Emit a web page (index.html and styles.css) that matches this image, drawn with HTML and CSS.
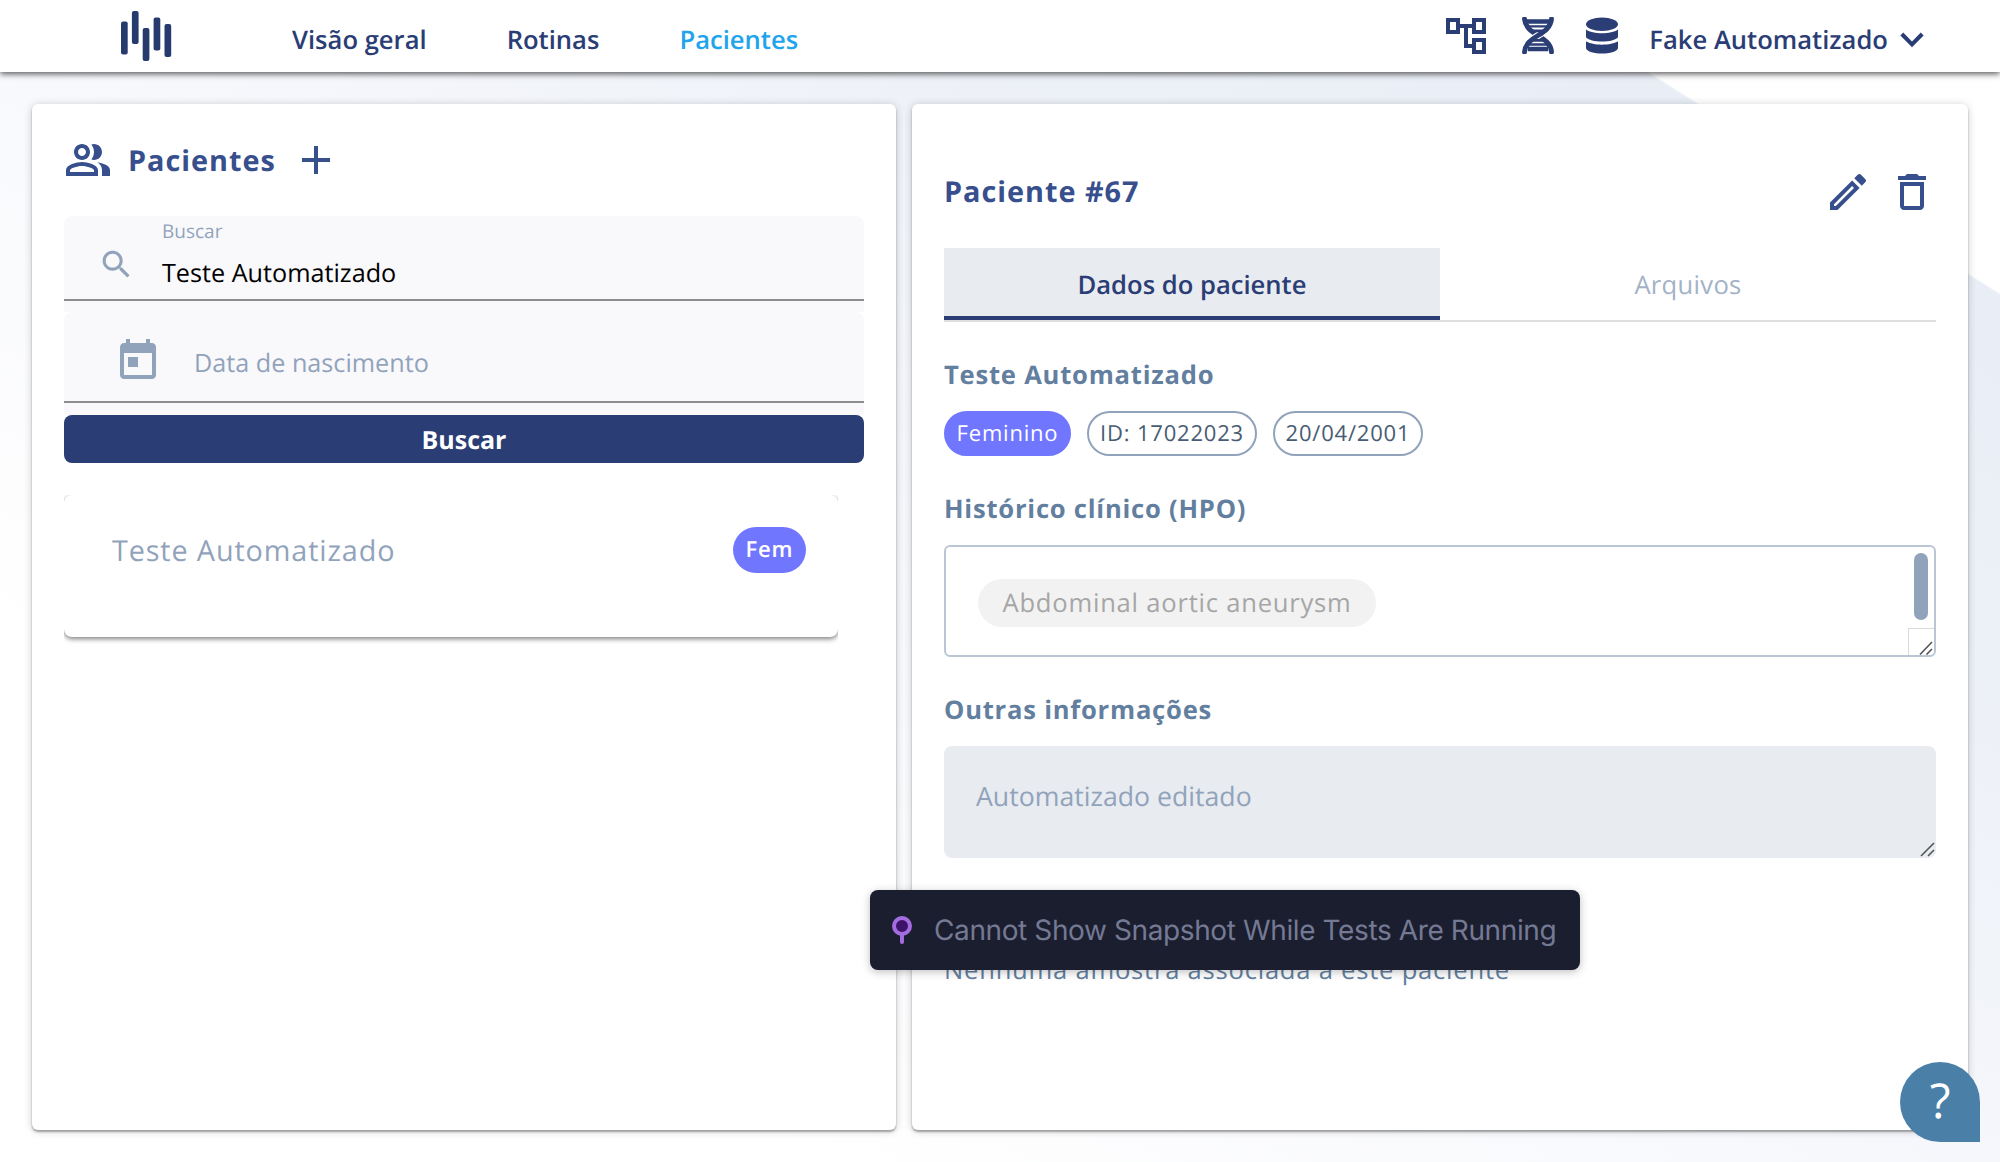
FILE: index.html
```
<!DOCTYPE html>
<html lang="pt-BR">
<head>
<meta charset="utf-8">
<title>Pacientes</title>
<link rel="stylesheet" href="styles.css">
</head>
<body>
<header class="topbar">
  <svg class="logo" width="52" height="52" viewBox="0 0 52 52"><rect x="1" y="11.500" width="6.700" height="33" rx="2"/><rect x="11.900" y="1" width="6.700" height="33" rx="2"/><rect x="22.700" y="18" width="6.700" height="33" rx="2"/><rect x="33.600" y="7.500" width="6.700" height="33" rx="2"/><rect x="44.500" y="14" width="6.700" height="33" rx="2"/></svg>
  <nav class="nav">
    <a>Visão geral</a>
    <a>Rotinas</a>
    <a class="active">Pacientes</a>
  </nav>
  <div class="tools">
    <svg width="48" height="48" viewBox="0 0 24 24"><path d="M22 11V3h-7v3H9V3H2v8h7V8h2v10h4v3h7v-8h-7v3h-2V8h2v3h7zM7 9H4V5h3v4zm10 6h3v4h-3v-4zm0-10h3v4h-3V5z"/></svg>
    <svg class="dna" width="32" height="37" viewBox="0 0 32 37"><path d="M2.500 2C4 19 28 18 29.500 35" class="strand"/><path d="M29.500 2C28 19 4 18 2.500 35" class="gap"/><path d="M29.500 2C28 19 4 18 2.500 35" class="strand"/><path d="M4 4.500h24M6 32h20" stroke="#2a3d75" stroke-width="4.400"/><path d="M7 9.400h18M7 27.500h18" stroke="#2a3d75" stroke-width="2.400"/><path d="M10 13.800h12M10 23.300h13" stroke="#2a3d75" stroke-width="2.800"/></svg>
    <svg class="db" width="32" height="37" viewBox="0 0 32 37"><ellipse cx="16" cy="7.200" rx="16" ry="6.700"/><path d="M0 12.500c7 5 25 5 32 0v7.800c-4 5.700-28 5.700-32 0zM0 24.300c7 4.500 25 4.500 32 0v7c-2 7-30 7-32 0z"/></svg>
    <span class="user">Fake Automatizado</span>
    <svg class="chev" width="24" height="16" viewBox="0 0 24 16"><path d="M1.800 2l10.200 10.500L22.200 2" fill="none" stroke="#2a3d75" stroke-width="4"/></svg>
  </div>
</header>
<main class="page">
  <section class="panel list-panel">
    <div class="list-head">
      <svg width="48" height="48" viewBox="0 0 24 24"><path d="M16.670 13.130C18.040 14.060 19 15.320 19 17v3h4v-3c0-2.180-3.570-3.470-6.330-3.870zM15 12c2.210 0 4-1.790 4-4s-1.790-4-4-4c-.47 0-.91.1-1.330.24C14.500 5.270 15 6.580 15 8s-.5 2.730-1.330 3.760c.42.14.86.24 1.330.24zM9 12c2.210 0 4-1.790 4-4s-1.790-4-4-4-4 1.790-4 4 1.790 4 4 4zm0-6c1.100 0 2 .9 2 2s-.9 2-2 2-2-.9-2-2 .9-2 2-2zM9 13c-2.670 0-8 1.340-8 4v3h16v-3c0-2.660-5.330-4-8-4zm6 5H3v-.99C3.200 16.290 6.300 15 9 15s5.800 1.290 6 2v1z"/></svg>
      <h1>Pacientes</h1>
      <svg class="plus" width="28" height="28" viewBox="0 0 28 28"><path d="M14 0v28M0 14h28" stroke="#384f8d" stroke-width="4"/></svg>
    </div>
    <div class="field search">
      <div class="field-box">
        <svg width="37" height="37" viewBox="0 0 24 24"><path d="M15.500 14h-.79l-.28-.27C15.410 12.590 16 11.110 16 9.500 16 5.910 13.090 3 9.500 3S3 5.910 3 9.500 5.910 16 9.500 16c1.610 0 3.090-.59 4.230-1.570l.27.28v.79l5 4.990L20.490 19l-4.990-5zm-6 0C7.010 14 5 11.990 5 9.500S7.010 5 9.500 5 14 7.010 14 9.500 11.990 14 9.500 14z"/></svg>
        <div class="field-text"><label>Buscar</label><span>Teste Automatizado</span></div>
      </div>
    </div>
    <div class="field date">
      <div class="field-box">
        <svg width="48" height="48" viewBox="0 0 24 24"><path d="M19 3h-1V1h-2v2H8V1H6v2H5c-1.110 0-1.990.9-1.990 2L3 19c0 1.100.89 2 2 2h14c1.100 0 2-.9 2-2V5c0-1.100-.9-2-2-2zm0 16H5V8h14v11zM7 10h5v5H7z"/></svg>
        <span>Data de nascimento</span>
      </div>
    </div>
    <button class="btn">Buscar</button>
    <div class="result-clip">
      <div class="result"><span class="result-name">Teste Automatizado</span><span class="badge">Fem</span></div>
    </div>
  </section>
  <section class="panel detail">
    <div class="detail-head">
      <h2>Paciente #67</h2>
      <svg width="48" height="48" viewBox="0 0 24 24"><path d="M14.060 9.020l.92.92L5.920 19H5v-.92l9.060-9.060M17.660 3c-.25 0-.51.1-.7.290l-1.830 1.830 3.750 3.750 1.830-1.830c.39-.39.39-1.020 0-1.410l-2.340-2.340c-.2-.2-.45-.29-.71-.29zm-3.600 3.190L3 17.250V21h3.750L17.810 9.940l-3.750-3.750z"/></svg>
      <svg class="trash" width="48" height="48" viewBox="0 0 24 24"><path d="M6 19c0 1.100.9 2 2 2h8c1.100 0 2-.9 2-2V7H6v12zM8 9h8v10H8V9zm7.500-5l-1-1h-5l-1 1H5v2h14V4z"/></svg>
    </div>
    <div class="tabs"><div class="tab on">Dados do paciente</div><div class="tab files">Arquivos</div></div>
    <h3 class="name">Teste Automatizado</h3>
    <div class="chips"><span class="chip fill">Feminino</span><span class="chip id">ID: 17022023</span><span class="chip born">20/04/2001</span></div>
    <h3 class="hist">Histórico clínico (HPO)</h3>
    <div class="hpo">
      <span class="term">Abdominal aortic aneurysm</span>
      <div class="thumb"></div>
      <div class="corner"><svg width="14" height="14" viewBox="0 0 14 14"><path d="M1 13.500L13 1M7.500 13.500L13 8" stroke="#555" stroke-width="1.600"/></svg></div>
    </div>
    <h3 class="other">Outras informações</h3>
    <div class="notes"><span>Automatizado editado</span><svg width="15" height="15" viewBox="0 0 15 15"><path d="M1 14L14 1M8 14l6-6" stroke="#555" stroke-width="1.600"/></svg></div>
    <p class="empty">Nenhuma amostra associada a este paciente</p>
  </section>
</main>
<div class="toast">
  <svg width="20" height="29" viewBox="0 0 20 29"><path d="M10 19v7" stroke="#a36de0" stroke-width="4" stroke-linecap="round"/><circle cx="10" cy="10" r="8" fill="#3c1368" stroke="#a36de0" stroke-width="4"/></svg>
  <span>Cannot Show Snapshot While Tests Are Running</span>
</div>
<div class="help">?</div>
</body>
</html>
```

FILE: styles.css
```
* { box-sizing: border-box; }
body {
  margin: 0;
  width: 2000px;
  height: 1162px;
  overflow: hidden;
  font-family: "Open Sans", "Noto Sans", sans-serif;
  font-size: 25.6px;
  line-height: 36px;
  text-rendering: geometricPrecision;
  display: flex;
  flex-direction: column;
}
h1, h2, h3, p { margin: 0; }
svg { display: block; flex: none; fill: #2a3d75; }

/* Top bar */
.topbar {
  height: 72px;
  flex: none;
  display: flex;
  align-items: flex-start;
  padding: 0 76px 0 120px;
  background: #fff;
  box-shadow: 0 2px 6px rgba(0, 0, 0, .65);
  position: relative;
  z-index: 2;
}
.logo { margin-top: 10px; fill: #263a6e; }
.nav {
  display: flex;
  gap: 80px;
  margin: 22px 0 0 120px;
  font-weight: 600;
  color: #2a3d75;
}
.nav .active { color: #20a4ec; }
.tools { margin: 12px 0 0 auto; display: flex; color: #2a3d75; }
.dna { margin: 5px 0 0 32px; }
.strand { fill: none; stroke: #2a3d75; stroke-width: 4.9; stroke-linecap: round; }
.gap { fill: none; stroke: #fff; stroke-width: 7; stroke-dasharray: 0 17 11 99; }
.db { margin: 5px 0 0 32px; }
.user { font-weight: 600; margin: 10px 12px 0 31px; }
.chev { margin-top: 20px; }

/* Page */
.page {
  flex: 1;
  min-height: 0;
  display: flex;
  gap: 16px;
  padding: 32px;
  background: linear-gradient(212.2deg, #fff 9.4%, #e9edf6 9.5%, #edf1f7 28%, #f7f8fc 50%, #fff 78%);
}
.panel {
  background: #fff;
  border-radius: 6px;
  box-shadow: 0 2px 2px rgba(0, 0, 0, .3), 0 1px 8px rgba(0, 0, 0, .2);
}
.list-panel { width: 864px; padding: 32px; }
.list-head { height: 48px; display: flex; align-items: center; color: #384f8d; }
.list-head svg { fill: #384f8d; }
h1, h2 { font-size: 28.8px; font-weight: 700; letter-spacing: 1px; color: #384f8d; }
h1 { margin: 1px 0 0 16px; }
.list-head .plus { margin-left: 26px; }
.field { background: #f9f9fb; height: 96px; padding-bottom: 11px; }
.field-box { display: flex; height: 85px; border-bottom: 2px solid #8d8d90; }
.field svg { fill: #91a3bb; }
.search { margin-top: 32px; border-radius: 8px 8px 0 0; }
.search svg { margin: 30px 0 0 34px; }
.field-text { display: flex; flex-direction: column; margin-left: 27px; }
.field-text label { font-size: 19px; line-height: 28px; margin-top: 1px; color: #91a3bb; }
.field-text span { margin-top: 10px; color: #000; font-size: 25.2px; }
.date { height: 103px; border-radius: 8px 8px 0 0; }
.date .field-box { height: 91px; }
.date svg { margin: 25px 0 0 50px; }
.date span { margin: 33px 0 0 32px; color: #91a3bb; font-size: 25.2px; }
.btn {
  display: block;
  width: 800px;
  height: 48px;
  border: 0;
  border-radius: 8px;
  background: #2a3d75;
  color: #fff;
  font: 700 25px/36px "Open Sans", sans-serif;
  text-rendering: inherit;
  padding: 1px 0 0;
}
.result-clip { width: 774px; margin-top: 32px; overflow: hidden; padding-bottom: 12px; }
.result {
  height: 142px;
  border-radius: 8px;
  box-shadow: 0 2px 5px rgba(0, 0, 0, .5);
  display: flex;
  justify-content: space-between;
  align-items: flex-start;
  padding: 32px 32px 0 48px;
}
.result-name { margin-top: 6px; font-size: 28.8px; letter-spacing: .03em; color: #91a3bb; }
.badge {
  width: 73px;
  height: 46px;
  border-radius: 23px;
  background: #7176ff;
  color: #fff;
  font-size: 22px;
  font-weight: 600;
  letter-spacing: .8px;
  line-height: 44px;
  text-align: center;
}

/* Patient detail */
.detail { width: 1056px; padding: 64px 32px 0; }
.detail-head { height: 48px; display: flex; align-items: center; }
.detail-head h2 { margin: -1px auto 0 0; }
.detail-head svg { fill: #384f8d; }
.detail-head .trash { margin-left: 16px; }
.tabs { display: flex; height: 74px; margin-top: 32px; border-bottom: 2px solid #dedfe0; }
.tab { flex: 1; text-align: center; line-height: 73px; color: #a3b2c6; }
.tab.on { background: #e8ebf0; border-bottom: 4px solid #2a3d75; color: #2a3d75; font-weight: 600; }
.files { letter-spacing: .3px; }
h3 { font-size: 25.6px; font-weight: 700; letter-spacing: .03em; color: #637f9f; }
.name { margin-top: 35px; }
.chips { display: flex; gap: 16px; margin-top: 18px; }
.chip {
  height: 45px;
  border-radius: 23px;
  border: 2px solid #91a3bb;
  color: #485c73;
  font-size: 22px;
  letter-spacing: .8px;
  line-height: 40px;
  text-align: center;
}
.fill { width: 127px; background: #7176ff; border-color: #7176ff; color: #fff; }
.id { width: 170px; }
.born { width: 150px; }
.hist { margin-top: 35px; }
.hpo {
  position: relative;
  height: 112px;
  margin-top: 18px;
  padding: 32px;
  border: 2px solid #bac6d6;
  border-radius: 6px;
}
.term {
  display: block;
  width: 398px;
  height: 48px;
  border-radius: 24px;
  background: #f2f2f2;
  color: #a6a6a6;
  letter-spacing: .03em;
  line-height: 48px;
  text-align: center;
}
.thumb { position: absolute; top: 6px; right: 6px; width: 14px; height: 67px; border-radius: 7px; background: #91a3bb; }
.corner {
  position: absolute;
  right: 0;
  bottom: 0;
  width: 26px;
  height: 27px;
  border: 1px solid #d9d9d9;
  border-width: 1px 0 0 1px;
  padding: 12px 0 0 10px;
}
.other { margin-top: 35px; }
.notes {
  display: flex;
  justify-content: space-between;
  align-items: flex-end;
  height: 112px;
  margin-top: 18px;
  padding: 32px 1px 1px 32px;
  border-radius: 8px;
  background: #e8ebf0;
  color: #91a3bb;
  font-size: 26.67px;
}
.notes span { align-self: flex-start; }
.empty { margin-top: 94px; letter-spacing: .03em; color: #637f9f; }

/* Overlays */
.toast {
  position: absolute;
  z-index: 3;
  left: 870px;
  top: 890px;
  width: 710px;
  height: 80px;
  border-radius: 8px;
  background: #1b1e2e;
  box-shadow: 0 2px 8px rgba(0, 0, 0, .25);
  display: flex;
  align-items: center;
  padding-left: 22px;
  color: #747994;
  font: 28px/36px Inter, sans-serif;
  letter-spacing: -.39px;
  white-space: nowrap;
}
.toast span { margin-left: 22px; }
.help {
  position: absolute;
  z-index: 3;
  left: 1900px;
  top: 1062px;
  width: 80px;
  height: 80px;
  border-radius: 40px 40px 0 40px;
  background: #4a7fa7;
  color: #fff;
  font-size: 48px;
  line-height: 78px;
  text-align: center;
}
```
